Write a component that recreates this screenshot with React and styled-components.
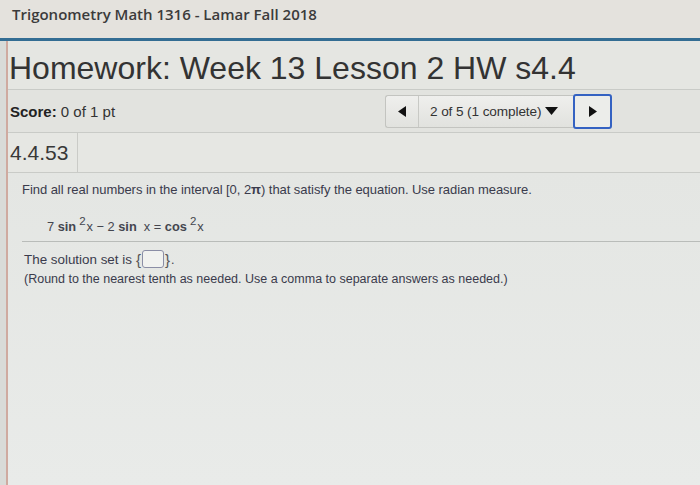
import styled, { createGlobalStyle } from "styled-components";

const GlobalStyle = createGlobalStyle`
  html, body {
    margin: 0;
    padding: 0;
  }
  body {
    background: #dcdedb;
    font-family: "Liberation Sans", Arial, sans-serif;
  }
`;

const Page = styled.div`
  width: 700px;
  height: 485px;
  overflow: hidden;
  display: flex;
  flex-direction: column;
  background: #d9dbd8;
`;

const TopBar = styled.div`
  height: 35px;
  padding: 3px 0 0 12px;
  background: #e4e2dd;
  border-bottom: 3px solid #336d93;
  box-sizing: content-box;
`;

const CourseTitle = styled.h1`
  margin: 0;
  font-family: "Open Sans", sans-serif;
  font-weight: 600;
  font-size: 15px;
  line-height: 22px;
  color: #3b3b3b;
`;

const Panel = styled.div`
  flex: 1;
  margin-left: 6px;
  border-left: 2px solid #cfaaa0;
  display: flex;
  flex-direction: column;
  background: #e5e6e2;
`;

const HwTitle = styled.h2`
  margin: 0;
  height: 48px;
  padding-left: 1px;
  font-weight: 400;
  font-size: 32px;
  line-height: 54px;
  color: #333;
  border-bottom: 1px solid #c9cbc7;
  white-space: nowrap;
`;

const ScoreRow = styled.div`
  height: 42px;
  display: flex;
  align-items: center;
  justify-content: space-between;
  padding: 0 88px 0 2px;
  border-bottom: 1px solid #c9cbc7;
  background: #e2e3df;
`;

const Score = styled.div`
  font-size: 15px;
  color: #333;
  b {
    font-weight: 700;
    color: #222;
  }
`;

const Nav = styled.div`
  display: flex;
  align-items: center;
`;

const NavGroup = styled.div`
  display: flex;
  height: 31px;
  border: 1px solid #c3c4c0;
  border-right: none;
  border-radius: 3px 0 0 3px;
  background: linear-gradient(#efefed, #e1e2de);
`;

const Arrow = styled.svg`
  width: 8px;
  height: 11px;
  fill: #111;
`;

const PrevButton = styled.div`
  width: 32px;
  display: flex;
  align-items: center;
  justify-content: center;
  border-right: 1px solid #c8c9c5;
`;

const Picker = styled.div`
  width: 154px;
  display: flex;
  align-items: center;
  padding-left: 11px;
  gap: 4px;
  font-size: 13.6px;
  letter-spacing: -0.1px;
  color: #333;
  box-sizing: border-box;
`;

const Caret = styled.svg`
  width: 13px;
  height: 8px;
  fill: #111;
`;

const NextButton = styled.div`
  width: 35px;
  height: 31px;
  display: flex;
  align-items: center;
  justify-content: center;
  border: 2px solid #3462c2;
  border-radius: 3px;
  background: #ecedea;
`;

const QuestionRow = styled.div`
  height: 39px;
  display: flex;
  border-bottom: 1px solid #c9cbc7;
  background: #e6e7e3;
`;

const QNum = styled.div`
  width: 67px;
  padding-left: 2px;
  display: flex;
  align-items: center;
  font-size: 21px;
  color: #383838;
  border-right: 1px solid #cacbc7;
`;

const Content = styled.div`
  flex: 1;
  padding: 9px 0 0 14px;
  color: #3a3b4c;
  background: linear-gradient(#e4e6e3, #e9ebe9);
`;

const Prompt = styled.p`
  margin: 0;
  font-size: 13px;
  line-height: 16px;
  letter-spacing: -0.05px;
`;

const Equation = styled.div`
  padding: 21px 0 6px 25px;
  font-size: 12.8px;
  line-height: 16px;
  color: #44464f;
  border-bottom: 1px solid #b9bcb9;
  b {
    font-weight: 700;
  }
  sup {
    font-size: 11.5px;
    line-height: 0;
    position: relative;
    top: -1px;
    margin: 0 1px 0 3px;
  }
`;

const Answer = styled.div`
  padding: 8px 0 0 2px;
  line-height: 19px;
  font-size: 12.5px;
`;

const Lead = styled.span`
  font-size: 13.4px;
`;

const Braces = styled.span`
  display: inline-flex;
  align-items: center;
  vertical-align: middle;
  margin: -3px 1px 0 4px;
  font-size: 15px;
  color: #555;
`;

const Blank = styled.span`
  display: inline-block;
  width: 20px;
  height: 16px;
  margin: 0 1px;
  border: 1px solid #8b8ea6;
  border-radius: 3px;
  background: #f1f2f0;
`;

export default function App() {
  return (
    <>
      <GlobalStyle />
      <Page>
        <TopBar>
          <CourseTitle>Trigonometry Math 1316 - Lamar Fall 2018</CourseTitle>
        </TopBar>
        <Panel>
          <HwTitle>Homework: Week 13 Lesson 2 HW s4.4</HwTitle>
          <ScoreRow>
            <Score>
              <b>Score:</b> 0 of 1 pt
            </Score>
            <Nav>
              <NavGroup>
                <PrevButton>
                  <Arrow viewBox="0 0 8 11">
                    <path d="M8 0 L0 5.5 L8 11 Z" />
                  </Arrow>
                </PrevButton>
                <Picker>
                  2 of 5 (1 complete)
                  <Caret viewBox="0 0 13 8">
                    <path d="M0 0 H13 L6.5 8 Z" />
                  </Caret>
                </Picker>
              </NavGroup>
              <NextButton>
                <Arrow viewBox="0 0 8 11">
                  <path d="M0 0 L8 5.5 L0 11 Z" />
                </Arrow>
              </NextButton>
            </Nav>
          </ScoreRow>
          <QuestionRow>
            <QNum>4.4.53</QNum>
          </QuestionRow>
          <Content>
            <Prompt>
              Find all real numbers in the interval [0, 2<b>π</b>) that satisfy
              the equation. Use radian measure.
            </Prompt>
            <Equation>
              7 <b>sin</b>
              <sup>2</sup>x − 2 <b>sin</b>&nbsp; x = <b>cos</b>
              <sup>2</sup>x
            </Equation>
            <Answer>
              <Lead>The solution set is</Lead>
              <Braces>
                {"{"}
                <Blank />
                {"}"}
              </Braces>
              .
              <br />
              (Round to the nearest tenth as needed. Use a comma to separate
              answers as needed.)
            </Answer>
          </Content>
        </Panel>
      </Page>
    </>
  );
}
